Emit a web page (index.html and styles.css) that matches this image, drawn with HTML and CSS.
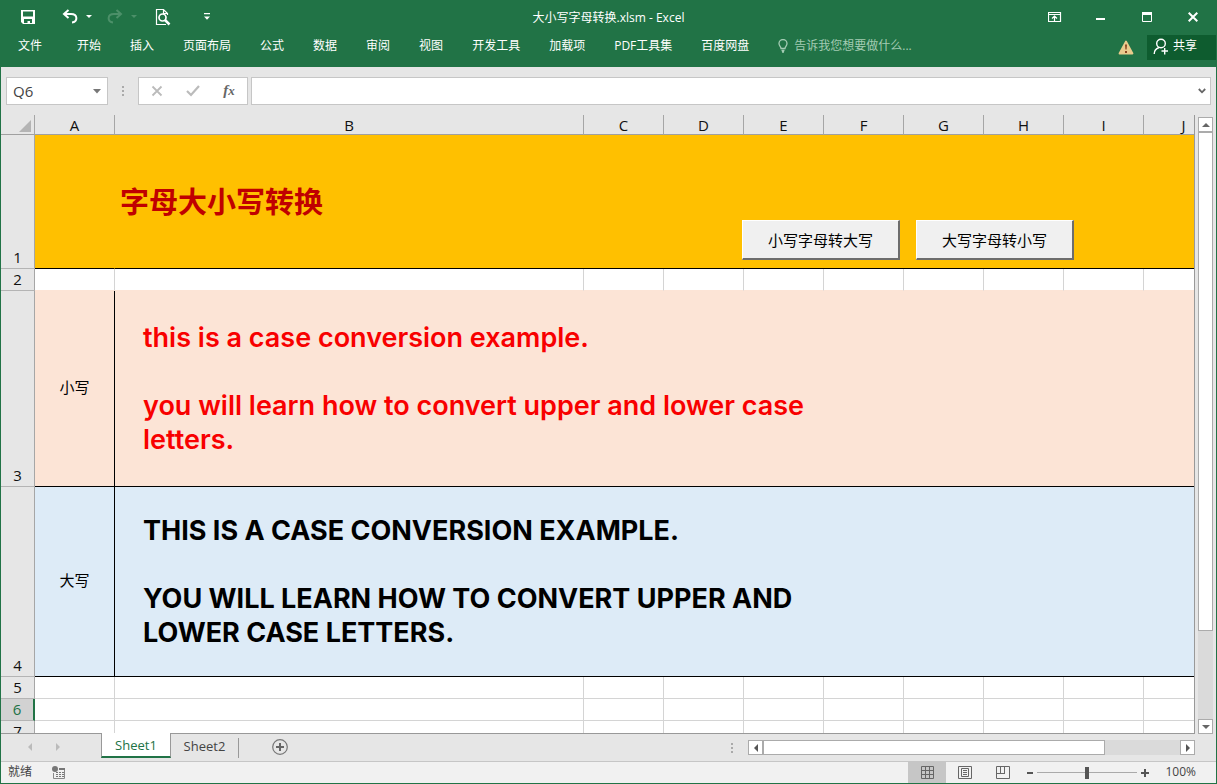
FILE: index.html
```html
<!DOCTYPE html>
<html lang="zh-CN">
<head>
<meta charset="utf-8">
<meta name="viewport" content="width=device-width, initial-scale=1">
<title>大小写字母转换.xlsm - Excel</title>
<link rel="stylesheet" href="styles.css">
</head>
<body>
<div class="window">
  <header class="ribbon">
    <div class="titlebar">
      <div class="quick">
        <button class="icon-btn" aria-label="保存"><svg width="16" height="16" viewBox="0 0 16 16"><path d="M1 1h14v14H3l-2-2z" fill="#fff"/><path d="M3 2.500h10v5H3zM4 10h8v4h-2v-2H7.500v2H4z" fill="#217346"/></svg></button>
        <button class="icon-btn undo" aria-label="撤消"><svg width="16" height="16" viewBox="0 0 16 16"><path d="M6.500 1L2 5l4.500 4M2.500 5H9c7 0 7 8 1 8.500" fill="none" stroke="#fff" stroke-width="2"/></svg></button>
        <button class="icon-btn narrow" aria-label="撤消列表"><svg width="6" height="4" viewBox="0 0 6 4"><path d="M0 0h6L3 3z" fill="#fff"/></svg></button>
        <button class="icon-btn redo" aria-label="恢复"><svg width="16" height="16" viewBox="0 0 16 16"><path d="M9.500 1L14 5 9.500 9M13.500 5H7C0 5 0 13 6 13.500" fill="none" stroke="#4c9069" stroke-width="2"/></svg></button>
        <button class="icon-btn narrow" aria-label="恢复列表"><svg width="6" height="4" viewBox="0 0 6 4"><path d="M0 0h6L3 3z" fill="#4c9069"/></svg></button>
        <button class="icon-btn preview" aria-label="打印预览"><svg width="16" height="18" viewBox="0 0 16 18"><path d="M4 16.500H1.500v-15h7l4 4V7M8.500 1.500v4h4M4 16.500h7" fill="none" stroke="#fff" stroke-width="1.200"/><circle cx="7.500" cy="9.500" r="3.500" fill="none" stroke="#fff" stroke-width="1.700"/><path d="M10 12l4.500 4.500" stroke="#fff" stroke-width="2.500"/></svg></button>
        <button class="icon-btn customize" aria-label="自定义"><svg width="6" height="8" viewBox="0 0 6 8"><path d="M0 0h6v1.200H0zM0 3.500h6L3 6.800z" fill="#fff"/></svg></button>
      </div>
      <div class="doc-title">大小写字母转换.xlsm - Excel</div>
      <div class="controls">
        <button class="icon-btn" aria-label="功能区显示选项"><svg width="14" height="12" viewBox="0 0 14 12"><path d="M.5 1.500h12v9H.5zM.5 3.500h12M6.500 10V5M4 7.500L6.500 5 9 7.500" fill="none" stroke="#fff" stroke-width="1.200"/></svg></button>
        <button class="icon-btn" aria-label="最小化"><svg width="10" height="12" viewBox="0 0 10 12"><path d="M0 7h9v2H0z" fill="#fff"/></svg></button>
        <button class="icon-btn" aria-label="最大化"><svg width="10" height="10" viewBox="0 0 10 10"><path d="M.5.5h9v9h-9z" fill="none" stroke="#fff"/><path d="M0 0h10v3H0z" fill="#fff"/></svg></button>
        <button class="icon-btn" aria-label="关闭"><svg width="10" height="10" viewBox="0 0 10 10"><path d="M.7.7l8.600 8.600M9.300.7L.7 9.300" stroke="#fff" stroke-width="2"/></svg></button>
      </div>
    </div>
    <div class="menubar">
      <nav class="menu">
        <button class="menu-item file">文件</button><button class="menu-item">开始</button><button class="menu-item">插入</button><button class="menu-item">页面布局</button><button class="menu-item">公式</button><button class="menu-item">数据</button><button class="menu-item">审阅</button><button class="menu-item">视图</button><button class="menu-item">开发工具</button><button class="menu-item">加载项</button><button class="menu-item">PDF工具集</button><button class="menu-item">百度网盘</button>
        <button class="menu-item tell"><svg width="10" height="14" viewBox="0 0 10 14"><path d="M3 9.500C3 7.500 1 7 1 4.500a4 4 0 0 1 8 0C9 7 7 7.500 7 9.500zM3.500 11.500h3M4 13h2" fill="none" stroke="#a3cbb3" stroke-width="1.300"/></svg>告诉我您想要做什么...</button>
      </nav>
      <div class="account">
        <svg class="warning" width="16" height="15" viewBox="0 0 16 15"><path d="M8 1.500l6.500 12h-13z" fill="#e9cb8c" stroke="#e9cb8c" stroke-width="1.800" stroke-linejoin="round"/><path d="M7 4.500h2l-.4 5H7.400zM7 11h2v2H7z" fill="#8a4520"/></svg>
        <button class="share"><svg width="16" height="17" viewBox="0 0 16 17"><circle cx="8" cy="5.500" r="4.300" fill="none" stroke="#fff" stroke-width="1.400"/><path d="M1.200 16c0-3.500 2-5.500 4.800-6.500M8.500 13H15M11.700 10v6.500" fill="none" stroke="#fff" stroke-width="1.400"/></svg>共享</button>
      </div>
    </div>
  </header>

  <div class="formula-bar">
    <div class="name-box"><input class="name-input" value="Q6" aria-label="名称框"><svg width="8" height="5" viewBox="0 0 8 5"><path d="M0 0h8L4 4.500z" fill="#777"/></svg></div>
    <svg class="dots" width="2" height="12" viewBox="0 0 2 12"><path d="M0 1h2v2H0zM0 5h2v2H0zM0 9h2v2H0z" fill="#aaa"/></svg>
    <div class="entry-buttons">
      <button class="icon-btn" aria-label="取消"><svg width="12" height="12" viewBox="0 0 12 12"><path d="M1.500 1.500l9 9M10.500 1.500l-9 9" stroke="#bbb" stroke-width="1.800"/></svg></button>
      <button class="icon-btn" aria-label="输入"><svg width="14" height="12" viewBox="0 0 14 12"><path d="M1 6l4 4 8-9" fill="none" stroke="#bbb" stroke-width="2.200"/></svg></button>
      <button class="icon-btn fx" aria-label="插入函数">f<span class="fx-x">x</span></button>
    </div>
    <div class="formula-box"><input class="formula-input" aria-label="编辑栏"><svg width="8" height="6" viewBox="0 0 8 6"><path d="M.8 1L4 4.300 7.200 1" fill="none" stroke="#666" stroke-width="1.800"/></svg></div>
  </div>

  <main class="workspace">
    <div class="sheet">
      <table class="grid">
        <colgroup><col class="c-head"><col class="c-std"><col class="c-wide"><col class="c-std"><col class="c-std"><col class="c-std"><col class="c-std"><col class="c-std"><col class="c-std"><col class="c-std"><col></colgroup>
        <thead><tr><th class="corner"><svg width="12" height="12" viewBox="0 0 12 12"><path d="M12 0v12H0z" fill="#b4b4b4"/></svg></th><th>A</th><th>B</th><th>C</th><th>D</th><th>E</th><th>F</th><th>G</th><th>H</th><th>I</th><th>J</th></tr></thead>
        <tbody>
          <tr class="row-title"><th>1</th><td></td><td colspan="9"><div class="banner"><h1 class="banner-title">字母大小写转换</h1><div class="banner-actions"><button class="form-btn">小写字母转大写</button><button class="form-btn">大写字母转小写</button></div></div></td></tr>
          <tr class="row-gap"><th>2</th><td></td><td></td><td></td><td></td><td></td><td></td><td></td><td></td><td></td><td></td></tr>
          <tr class="row-lower"><th>3</th><td class="label">小写</td><td colspan="9"><div class="sample">this is a case conversion example.<br><br>you will learn how to convert upper and lower case<br>letters.</div></td></tr>
          <tr class="row-upper"><th>4</th><td class="label">大写</td><td colspan="9"><div class="sample">THIS IS A CASE CONVERSION EXAMPLE.<br><br>YOU WILL LEARN HOW TO CONVERT UPPER AND<br>LOWER CASE LETTERS.</div></td></tr>
          <tr><th>5</th><td></td><td></td><td></td><td></td><td></td><td></td><td></td><td></td><td></td><td></td></tr>
          <tr class="current"><th>6</th><td></td><td></td><td></td><td></td><td></td><td></td><td></td><td></td><td></td><td></td></tr>
          <tr><th>7</th><td></td><td></td><td></td><td></td><td></td><td></td><td></td><td></td><td></td><td></td></tr>
        </tbody>
      </table>
    </div>
    <div class="vscroll">
      <button class="scroll-btn" aria-label="向上"><svg width="8" height="4" viewBox="0 0 8 4"><path d="M0 4h8L4 0z" fill="#666"/></svg></button>
      <div class="vtrack"><div class="vthumb"></div></div>
      <button class="scroll-btn" aria-label="向下"><svg width="8" height="4" viewBox="0 0 8 4"><path d="M0 0h8L4 4z" fill="#666"/></svg></button>
    </div>
  </main>

  <div class="tabbar">
    <div class="tab-nav">
      <button class="icon-btn" aria-label="上一个"><svg width="4" height="8" viewBox="0 0 4 8"><path d="M4 0v8L0 4z" fill="#bbb"/></svg></button>
      <button class="icon-btn" aria-label="下一个"><svg width="4" height="8" viewBox="0 0 4 8"><path d="M0 0v8l4-4z" fill="#bbb"/></svg></button>
    </div>
    <button class="tab active">Sheet1</button>
    <button class="tab">Sheet2</button>
    <span class="tab-divider"></span>
    <button class="icon-btn add-tab" aria-label="新工作表"><svg width="16" height="16" viewBox="0 0 16 16"><circle cx="8" cy="8" r="7.300" fill="none" stroke="#777" stroke-width="1.200"/><path d="M4 8h8M8 4v8" stroke="#666" stroke-width="2"/></svg></button>
    <div class="hscroll">
      <svg class="splitter" width="2" height="12" viewBox="0 0 2 12"><path d="M0 1h2v2H0zM0 5h2v2H0zM0 9h2v2H0z" fill="#aaa"/></svg>
      <button class="scroll-btn" aria-label="向左"><svg width="4" height="8" viewBox="0 0 4 8"><path d="M4 0v8L0 4z" fill="#555"/></svg></button>
      <div class="htrack"><div class="hthumb"></div></div>
      <button class="scroll-btn" aria-label="向右"><svg width="4" height="8" viewBox="0 0 4 8"><path d="M0 0v8l4-4z" fill="#555"/></svg></button>
    </div>
  </div>

  <footer class="status">
    <span class="status-text">就绪</span>
    <button class="icon-btn macro" aria-label="录制宏"><svg width="14" height="14" viewBox="0 0 14 14"><path d="M7 2.500h5.500v10h-11V7" fill="none" stroke="#888"/><path d="M7 2h6v2H7z" fill="#777"/><circle cx="3" cy="3" r="3" fill="#777"/><path d="M4 6.500h8M4 8.500h8M4 10.500h8" stroke="#777" stroke-dasharray="2 1"/></svg></button>
    <div class="views">
      <button class="view-btn on" aria-label="普通"><svg width="13" height="13" viewBox="0 0 13 13"><path d="M.5.5h12v12H.5zM4.500 0v13M8.500 0v13M0 4.500h13M0 8.500h13" fill="none" stroke="#666"/></svg></button>
      <button class="view-btn" aria-label="页面布局"><svg width="14" height="13" viewBox="0 0 14 13"><path d="M.5.500h13v12H.5zM3.500 2.500h7v8h-7zM5 4.500h4M5 6.500h4M5 8.500h4" fill="none" stroke="#666"/></svg></button>
      <button class="view-btn" aria-label="分页预览"><svg width="14" height="13" viewBox="0 0 14 13"><path d="M.5.500h13v12H.5zM.5 7.500h8M4.500 0v7M8.500 0v8" fill="none" stroke="#666"/></svg></button>
    </div>
    <button class="icon-btn zoom-btn" aria-label="缩小"><svg width="8" height="8" viewBox="0 0 8 8"><path d="M1 3h6v2H1z" fill="#555"/></svg></button>
    <input class="zoom-slider" type="range" min="0" max="100" value="50" aria-label="显示比例">
    <button class="icon-btn zoom-btn" aria-label="放大"><svg width="8" height="8" viewBox="0 0 8 8"><path d="M0 3h8v2H0zM3 0h2v8H3z" fill="#555"/></svg></button>
    <span class="zoom-value">100%</span>
  </footer>
</div>
</body>
</html>
```
FILE: styles.css
```css
* { box-sizing: border-box; }
body { margin: 0; font: 12px/16px "Open Sans", "Noto Sans CJK SC", sans-serif; color: #444; }
button, input { font: inherit; color: inherit; border: 0; background: none; padding: 0; margin: 0; border-radius: 0; }
svg { display: block; flex: none; }
.window { height: 100vh; display: flex; flex-direction: column; background: #e6e6e6; border: 1px solid #217346; border-top: 0; overflow: hidden; }
.icon-btn { display: flex; align-items: center; justify-content: center; flex: none; width: 16px; height: 18px; }

.ribbon { background: #217346; color: #fff; height: 67px; flex: none; }
.titlebar { display: grid; grid-template-columns: 1fr auto 1fr; align-items: center; height: 34px; }
.doc-title { padding-top: 2px; }
.quick { display: flex; align-items: center; padding-left: 19px; }
.undo { margin-left: 26px; }
.narrow { width: 6px; margin-left: 8px; }
.redo { margin-left: 15px; }
.preview { margin-left: 18px; }
.customize { margin-left: 28px; }
.controls { display: flex; justify-content: flex-end; gap: 30px; padding-right: 15px; }
.menubar { display: flex; justify-content: space-between; height: 26px; }
.menu { display: flex; align-items: center; gap: 29px; padding-left: 17px; height: 24px; }
.menu-item { white-space: nowrap; }
.file { margin-right: 6px; }
.tell { display: flex; align-items: center; gap: 6px; color: #a3cbb3; }
.account { display: flex; align-items: center; gap: 13px; }
.share { display: flex; align-items: center; gap: 4px; width: 69px; height: 25px; padding: 0 0 2px 6px; background: #0e5c2f; }

.formula-bar { display: flex; align-items: center; height: 48px; padding: 0 5px; flex: none; }
.name-box, .entry-buttons, .formula-box { display: flex; align-items: center; height: 28px; background: #fff; border: 1px solid #c6c6c6; }
.name-box { width: 102px; padding: 0 6px; }
.name-input { width: 100%; min-width: 0; font-size: 15px; }
.dots { margin: 0 14px; }
.entry-buttons { width: 110px; justify-content: space-around; }
.fx { font: italic bold 15px/18px "Liberation Serif", serif; color: #666; padding-bottom: 3px; }
.fx-x { font-size: 13px; padding-top: 3px; }
.formula-box { flex: 1; margin-left: 3px; padding-right: 4px; }
.formula-input { flex: 1; min-width: 0; }

.workspace { flex: 1; min-height: 0; display: flex; }
.sheet { flex: 1; min-width: 0; overflow: hidden; border-bottom: 1px solid #999; border-right: 1px solid #999; }
.grid { table-layout: fixed; width: 100%; min-width: 1223px; border-spacing: 0; background: #fff; }
.c-head { width: 34px; }
.c-std { width: 80px; }
.c-wide { width: 469px; }
.grid th { padding: 0 0 2px; background: #e6e6e6; color: #111; font-size: 15px; line-height: 18px; font-weight: 400; border-right: 1px solid #a6a6a6; border-bottom: 1px solid #b4b4b4; vertical-align: bottom; }
.grid thead th { height: 20px; padding: 0; border-bottom-color: #a0a0a0; }
.grid .corner svg { margin: 0 3px 2px auto; }
.grid td { padding: 0; height: 22px; border-right: 1px solid #d4d4d4; border-bottom: 1px solid #d4d4d4; }
.grid tbody th { height: 22px; line-height: 17px; }
.grid .row-title td { height: 134px; background: #ffc000; border-right-color: #ffc000; border-bottom-color: #000; }
.grid .row-gap td { border-bottom-color: #fce4d6; }
.grid .row-lower td { height: 196px; background: #fce4d6; border-color: #000; }
.grid .row-upper td { height: 190px; background: #ddebf7; border-color: #000; }
.grid .current th { background: #d2d2d2; color: #217346; border-right: 2px solid #217346; }
.grid .label { text-align: center; color: #000; font-size: 15px; padding-bottom: 3px; }
.banner { display: grid; grid-template-columns: 622px 1fr; height: 133px; padding-left: 5px; }
.banner-title { margin: 0; align-self: center; font-size: 29px; line-height: 40px; color: #c00000; }
.banner-actions { display: flex; gap: 16px; align-self: end; padding-bottom: 8px; }
.form-btn { width: 158px; height: 40px; background: #f0f0f0; color: #000; font-size: 15px; border: 1px solid #fff; border-right: 2px solid #6d6d6d; border-bottom: 2px solid #6d6d6d; }
.sample { padding-left: 28px; font: 600 27px/34px Inter, sans-serif; white-space: nowrap; }
.row-lower .sample { color: #f80000; }
.row-upper .sample { color: #000; font-weight: 700; }

.vscroll { width: 21px; padding: 2px 3px 0; display: flex; flex-direction: column; flex: none; }
.scroll-btn { display: flex; align-items: center; justify-content: center; flex: none; width: 15px; height: 15px; background: #fff; border: 1px solid #ababab; }
.vtrack { flex: 1; background: #dadada; }
.vthumb { height: 85%; background: #fff; border: 1px solid #ababab; }

.tabbar { display: flex; align-items: flex-start; height: 27px; flex: none; }
.tab-nav { display: flex; gap: 12px; width: 100px; padding: 4px 0 0 21px; }
.tab { height: 24px; width: 67px; font-size: 13px; }
.tab.active { width: 70px; height: 25px; margin-top: -1px; background: #fff; color: #217346; border: 1px solid #999; border-top: 0; border-bottom: 2px solid #217346; }
.tab-divider { width: 1px; height: 20px; margin-top: 4px; background: #999; }
.add-tab { margin: 4px 0 0 33px; }
.hscroll { display: flex; align-items: center; margin: 6px 21px 0 auto; width: 39%; }
.splitter { margin: 0 15px 0 10px; }
.htrack { flex: 1; height: 15px; background: #dadada; }
.hthumb { width: 82%; height: 15px; background: #fff; border: 1px solid #ababab; }

.status { display: flex; align-items: center; height: 22px; flex: none; padding: 0 20px 0 7px; background: #f1f1f1; border-top: 1px solid #c6c6c6; }
.status-text, .zoom-value { padding-bottom: 2px; }
.macro { margin-left: 19px; }
.views { display: flex; margin-left: auto; }
.view-btn { display: flex; align-items: center; justify-content: center; width: 38px; height: 21px; }
.view-btn.on { background: #c6c6c6; }
.zoom-btn { margin: 0 -1px 0 0; }
.zoom-slider { appearance: none; width: 100px; height: 12px; background: linear-gradient(#aaa, #aaa) center / 100% 1px no-repeat; }
.zoom-slider::-webkit-slider-thumb { appearance: none; width: 4px; height: 12px; background: #555; }
.zoom-value { width: 32px; margin-left: 12px; text-align: right; }
```
